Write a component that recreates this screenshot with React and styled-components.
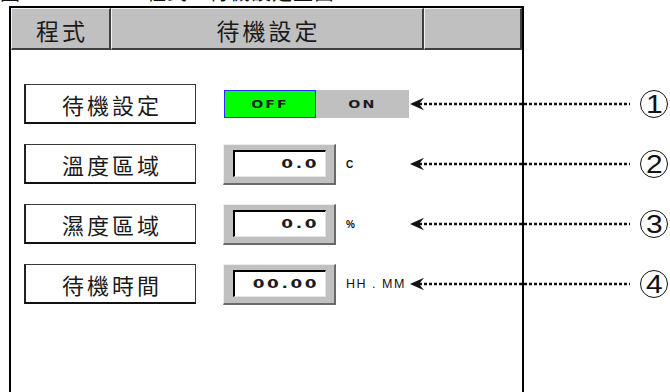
import React from 'react';
import styled, { createGlobalStyle } from 'styled-components';

const Global = createGlobalStyle`
  html, body { margin: 0; padding: 0; background: #fff; }
  body { font-family: "Noto Sans CJK TC", "Noto Sans", sans-serif; color: #111; }
`;

const Page = styled.div`
  width: 670px;
  height: 392px;
  overflow: hidden;
  display: flex;
  flex-direction: column;
`;

const Caption = styled.div`
  height: 6px;
  flex-shrink: 0;
  overflow: hidden;
  display: flex;
  align-items: flex-end;
  font-size: 20px;
  line-height: 20px;
  color: #111;
`;

const CaptionText = styled.span`
  margin-left: ${(p) => p.$left}px;
  margin-bottom: 4.5px;
  letter-spacing: 1px;
  white-space: nowrap;
`;

const Panel = styled.div`
  margin-left: 9px;
  width: 511px;
  height: 420px;
  flex-shrink: 0;
  border: 2px solid #000;
  background: #fff;
  display: flex;
  flex-direction: column;
`;

const Header = styled.div`
  display: flex;
  height: 42px;
  flex-shrink: 0;
`;

const Tab = styled.div`
  box-sizing: border-box;
  width: ${(p) => (p.$w ? `${p.$w}px` : 'auto')};
  flex: ${(p) => (p.$w ? '0 0 auto' : '1 1 auto')};
  height: 42px;
  background: #c0c0c0;
  border-top: 1px solid #f2f2f2;
  border-left: 1px solid #f2f2f2;
  border-right: 2px solid #404040;
  border-bottom: 2px solid #404040;
  display: flex;
  align-items: center;
  justify-content: center;
  padding: 3px 0 0 3px;
  font-size: 23px;
  letter-spacing: 3px;
  color: #1a1a1a;
`;

const Rows = styled.div`
  display: flex;
  flex-direction: column;
  gap: 20px;
  padding: 34px 0 0 13px;
`;

const Row = styled.div`
  display: flex;
  align-items: center;
  height: 40px;
  width: max-content;
  align-self: flex-start;
`;

const Label = styled.div`
  box-sizing: border-box;
  flex-shrink: 0;
  width: 172px;
  height: 40px;
  margin-right: 27px;
  border: 1px solid #3a3a3a;
  border-left: 2px solid #222;
  border-bottom: 2px solid #111;
  display: flex;
  align-items: center;
  justify-content: center;
  padding-left: 3px;
  font-size: 22px;
  letter-spacing: 3px;
  color: #1a1a1a;
`;

const ControlArea = styled.div`
  flex-shrink: 0;
  width: 187px;
  display: flex;
  align-items: center;
`;

const Toggle = styled.div`
  display: flex;
  height: 28px;
  margin-left: 1px;
`;

const ToggleOption = styled.div`
  box-sizing: border-box;
  width: ${(p) => p.$w}px;
  height: 28px;
  background: ${(p) => (p.$active ? '#00ff00' : '#c0c0c0')};
  border: ${(p) => (p.$active ? '1px solid #2a2aff' : 'none')};
  display: flex;
  align-items: center;
  justify-content: center;
`;

const WideText = styled.span`
  display: inline-block;
  font-family: "DejaVu Sans", sans-serif;
  font-weight: ${(p) => p.$weight || 700};
  font-size: ${(p) => p.$size}px;
  letter-spacing: ${(p) => p.$ls}px;
  transform: scaleX(${(p) => p.$sx});
  transform-origin: ${(p) => p.$origin || 'center'} center;
  color: #1c1c1c;
  line-height: 1;
`;

const NumFrame = styled.div`
  box-sizing: border-box;
  width: 113px;
  height: 41px;
  flex-shrink: 0;
  background: #c0c0c0;
  border-top: 1px solid #ececec;
  border-left: 1px solid #ececec;
  border-right: 2px solid #6a6a6a;
  border-bottom: 2px solid #6a6a6a;
  padding: 5px 8px 6px 9px;
  display: flex;
`;

const Field = styled.div`
  flex: 1;
  background: #fff;
  border-top: 2px solid #000;
  border-left: 2px solid #000;
  border-right: 1px solid #e4e4e4;
  border-bottom: 1px solid #e4e4e4;
  display: flex;
  align-items: center;
  justify-content: flex-end;
  padding-right: 6px;
`;

const Unit = styled.span`
  margin-left: 10px;
  font-family: "Liberation Sans", Arial, sans-serif;
  font-size: ${(p) => p.$size}px;
  font-weight: ${(p) => p.$weight || 400};
  letter-spacing: ${(p) => p.$ls || 0}px;
  white-space: pre;
  color: #111;
`;

const Annotation = styled.div`
  flex-shrink: 0;
  display: flex;
  align-items: center;
  gap: 10px;
`;

const Circle = styled.div`
  box-sizing: border-box;
  width: 28px;
  height: 28px;
  border: 1.5px solid #111;
  border-radius: 50%;
  display: flex;
  align-items: center;
  justify-content: center;
`;

const Digit = styled.span`
  display: inline-block;
  font-family: "Liberation Sans", Arial, sans-serif;
  font-size: 26px;
  line-height: 1;
  transform: scaleX(1.15);
  color: #111;
`;

function Arrow() {
  return (
    <svg width="220" height="14" viewBox="0 0 220 14">
      <line x1="9" y1="7" x2="220" y2="7" stroke="#111" strokeWidth="2.6" strokeDasharray="3 2" />
      <path d="M0 7 L14 0.8 L9 7 L14 13.2 Z" fill="#111" />
    </svg>
  );
}

function Note({ n }) {
  return (
    <Annotation>
      <Arrow />
      <Circle>
        <Digit>{n}</Digit>
      </Circle>
    </Annotation>
  );
}

function NumberBox({ value }) {
  return (
    <NumFrame>
      <Field>
        <WideText $size={13} $ls={2} $sx={1.3} $origin="right">
          {value}
        </WideText>
      </Field>
    </NumFrame>
  );
}

export default function App() {
  return (
    <Page>
      <Global />
      <Caption>
        <CaptionText $left={0}>圖</CaptionText>
        <CaptionText $left={125}>程式－待機設定畫面</CaptionText>
      </Caption>
      <Panel>
        <Header>
          <Tab $w={100}>程式</Tab>
          <Tab $w={313}>待機設定</Tab>
          <Tab />
        </Header>
        <Rows>
          <Row>
            <Label>待機設定</Label>
            <ControlArea>
              <Toggle>
                <ToggleOption $w={92} $active>
                  <WideText $size={10.5} $ls={1.5} $sx={1.35}>OFF</WideText>
                </ToggleOption>
                <ToggleOption $w={93}>
                  <WideText $size={10.5} $ls={1.5} $sx={1.35}>ON</WideText>
                </ToggleOption>
              </Toggle>
            </ControlArea>
            <Note n="1" />
          </Row>
          <Row>
            <Label>溫度區域</Label>
            <ControlArea>
              <NumberBox value="0.0" />
              <Unit $size={10} $weight={700}>C</Unit>
            </ControlArea>
            <Note n="2" />
          </Row>
          <Row>
            <Label>濕度區域</Label>
            <ControlArea>
              <NumberBox value="0.0" />
              <Unit $size={10} $weight={700}>%</Unit>
            </ControlArea>
            <Note n="3" />
          </Row>
          <Row>
            <Label>待機時間</Label>
            <ControlArea>
              <NumberBox value="00.00" />
              <Unit $size={12.5} $ls={1.5}>HH . MM</Unit>
            </ControlArea>
            <Note n="4" />
          </Row>
        </Rows>
      </Panel>
    </Page>
  );
}
